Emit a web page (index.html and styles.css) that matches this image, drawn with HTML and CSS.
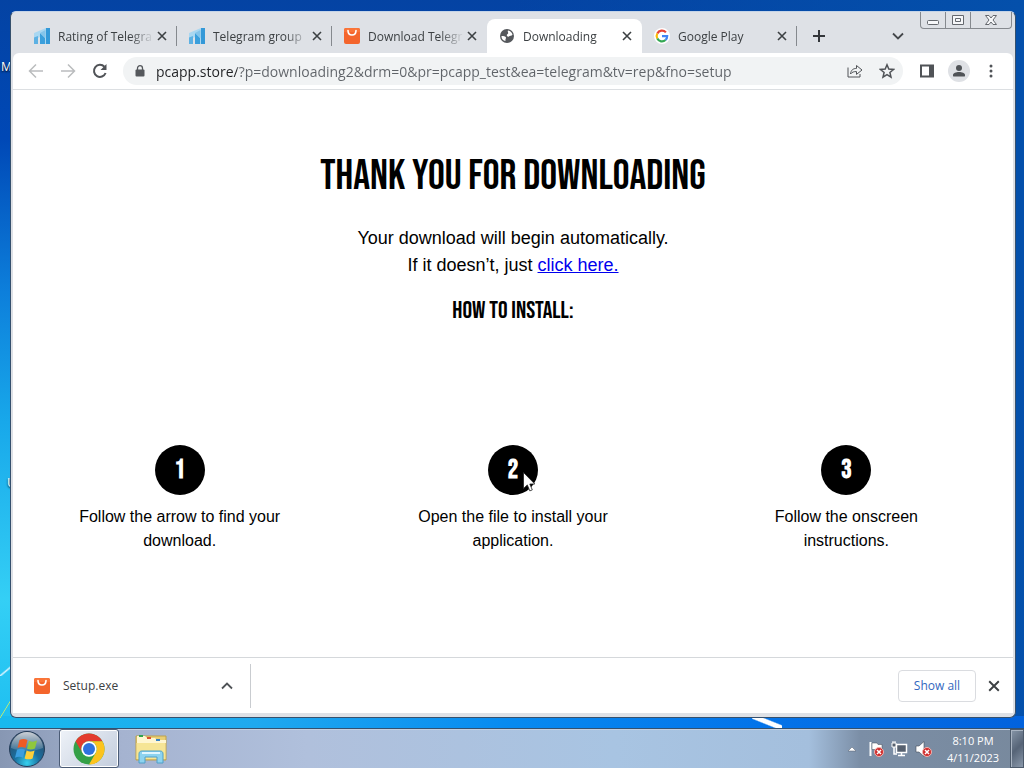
FILE: index.html
```
<!DOCTYPE html>
<html lang="en">
<head>
<meta charset="utf-8">
<meta name="viewport" content="width=device-width, initial-scale=1">
<title>Downloading</title>
<link rel="stylesheet" href="styles.css">
</head>
<body>

<!-- shared icons -->
<svg class="sprite" xmlns="http://www.w3.org/2000/svg">
  <symbol id="close" viewBox="0 0 10 10"><path d="M1 1l8 8M9 1L1 9" fill="none" stroke="currentColor" stroke-width="1.6"/></symbol>
  <symbol id="stats" viewBox="0 0 16 16">
    <path d="M0 5L12 0v16H6V9L0 12z" fill="#a9d7f1"/>
    <path d="M0 9.500l4-1.500v8H0z" fill="#5db1e3"/>
    <path d="M6 5l5 5v6H6z" fill="#3b9fdc"/>
    <path d="M6 5l5.500-3v8z" fill="#84c4ea"/>
    <path d="M12 0h4v16h-4z" fill="#3499d8"/>
  </symbol>
  <symbol id="bag" viewBox="0 0 16 16">
    <rect width="16" height="16" rx="2" fill="#f4652c"/>
    <path d="M0 4V2a2 2 0 0 1 2-2h12a2 2 0 0 1 2 2v2z" fill="#fa7438"/>
    <path d="M4 2.500c0 6 8 6 8 0" fill="none" stroke="#fff" stroke-width="1.600" stroke-linecap="round"/>
  </symbol>
  <symbol id="error" viewBox="0 0 10 10">
    <circle cx="5" cy="5" r="4.500" fill="#cf2b2b" stroke="#f3b4b0"/>
    <path d="M3 3l4 4M7 3L3 7" stroke="#fff" stroke-width="1.500"/>
  </symbol>
</svg>

<div class="desktop">
  <span class="shortcut shortcut-top">M</span>
  <span class="shortcut shortcut-low">U</span>

  <div class="workspace">
    <div class="window">
      <div class="titlebar">
        <div class="tabs">
          <div class="tab">
            <svg class="favicon"><use href="#stats"/></svg>
            <span class="tab-title">Rating of Telegra</span>
            <button class="tab-close" aria-label="Close tab"><svg><use href="#close"/></svg></button>
          </div>
          <div class="tab">
            <svg class="favicon"><use href="#stats"/></svg>
            <span class="tab-title">Telegram group</span>
            <button class="tab-close" aria-label="Close tab"><svg><use href="#close"/></svg></button>
          </div>
          <div class="tab before-active">
            <svg class="favicon"><use href="#bag"/></svg>
            <span class="tab-title">Download Telegr</span>
            <button class="tab-close" aria-label="Close tab"><svg><use href="#close"/></svg></button>
          </div>
          <div class="tab active">
            <svg class="favicon" viewBox="0 0 16 16">
              <circle cx="8" cy="8" r="7" fill="#55585c"/>
              <path d="M2.500 8c2 0 4 .3 4.500 1.500.3 1-.8 1.200-.5 3.500C4 12.500 2.300 10.500 2.500 8zM9 2.600c2.500.3 4 2 4.500 4.200-1 1.600-2.700.6-3.700 1.700-1 .6-2-.4-2-1.300 0-1 1.200-1 1.400-1.900.2-1-.9-1.500-.2-2.700z" fill="#fff"/>
            </svg>
            <span class="tab-title">Downloading</span>
            <button class="tab-close" aria-label="Close tab"><svg><use href="#close"/></svg></button>
          </div>
          <div class="tab">
            <svg class="favicon" viewBox="0 0 16 16">
              <circle cx="8" cy="8" r="8" fill="#fff"/>
              <g fill="none" stroke-width="2.200">
                <path d="M3.300 5.500A5.200 5.200 0 0 1 11.900 4.400" stroke="#ea4335"/>
                <path d="M3.300 10.500a5.200 5.200 0 0 1 0-5" stroke="#fbbc05"/>
                <path d="M11.500 12a5.200 5.200 0 0 1-8.200-1.500" stroke="#34a853"/>
                <path d="M8 8.100h5.200a5.200 5.200 0 0 1-1.700 3.900" stroke="#4285f4"/>
              </g>
            </svg>
            <span class="tab-title">Google Play</span>
            <button class="tab-close" aria-label="Close tab"><svg><use href="#close"/></svg></button>
          </div>
          <button class="new-tab" aria-label="New tab">
            <svg viewBox="0 0 12 12"><path d="M6 0v12M0 6h12" stroke="#33363a" stroke-width="2"/></svg>
          </button>
        </div>
        <button class="tab-search" aria-label="Search tabs">
          <svg viewBox="0 0 12 12"><path d="M1 3.500l5 5 5-5" fill="none" stroke="#44474b" stroke-width="1.800"/></svg>
        </button>
        <div class="window-controls">
          <button aria-label="Minimize"><svg viewBox="0 0 24 16"><rect x="6.500" y="8.500" width="11" height="4" rx="1"/></svg></button>
          <button aria-label="Maximize"><svg viewBox="0 0 24 16"><path d="M6.500 3.500h11v9h-11zM9.500 6.500h5v3h-5z"/></svg></button>
          <button class="wide" aria-label="Close"><svg viewBox="0 0 40 16"><path d="M14.500 3.500h3.500l2 2.500 2-2.500h3.500L22 8l3.500 4.500H22L20 10l-2 2.500h-3.500L18 8z"/></svg></button>
        </div>
      </div>

      <div class="toolbar">
        <button class="nav faded" aria-label="Back"><svg viewBox="0 0 16 16"><path d="M15 8H2M8 1.500L1.500 8 8 14.500"/></svg></button>
        <button class="nav faded" aria-label="Forward"><svg viewBox="0 0 16 16"><path d="M1 8h13M8 1.500L14.500 8 8 14.500"/></svg></button>
        <button class="nav" aria-label="Reload">
          <svg viewBox="0 0 16 16"><path d="M13.600 10A6 6 0 1 1 12.400 3.800" stroke-width="2"/><path d="M14.500 1v6h-6z" fill="#505357" stroke="none"/></svg>
        </button>
        <div class="omnibox">
          <svg class="lock" viewBox="0 0 10 12"><path d="M2.500 5V3.200a2.500 2.500 0 0 1 5 0V5" fill="none" stroke="#55585c" stroke-width="1.300"/><rect y="4.500" x="0.500" width="9" height="7" rx="1" fill="#55585c"/></svg>
          <input class="address" type="text" aria-label="Address" value="pcapp.store/?p=downloading2&amp;drm=0&amp;pr=pcapp_test&amp;ea=telegram&amp;tv=rep&amp;fno=setup">
          <button class="nav small" aria-label="Share">
            <svg class="thin" viewBox="0 0 16 16"><path d="M1 4.500V14h12v-3M3.500 11c.5-4 2.500-5.500 6-5.600V2.500L15 7l-5.500 4.400V8.600C7 8.500 5 9 3.500 11z"/></svg>
          </button>
          <button class="nav small" aria-label="Bookmark">
            <svg viewBox="0 0 16 16"><path d="M8 1.800l1.800 4.300 4.700.4-3.600 3 1.100 4.600L8 11.600 4 14.100l1.100-4.600-3.600-3 4.700-.4z"/></svg>
          </button>
        </div>
        <button class="nav" aria-label="Side panel">
          <svg viewBox="0 0 16 16"><path d="M1 1.500h14v13H1z" fill="#505357" stroke="none"/><path d="M3 3.500h7v9H3z" fill="#fff" stroke="none"/></svg>
        </button>
        <button class="nav profile" aria-label="Profile">
          <svg viewBox="0 0 16 16"><circle cx="8" cy="5" r="3" fill="#505357" stroke="none"/><path d="M2 13.500v-1.500c0-2 3-3 6-3s6 1 6 3v1.500z" fill="#505357" stroke="none"/></svg>
        </button>
        <button class="nav" aria-label="Menu">
          <svg viewBox="0 0 16 16"><g fill="#505357" stroke="none"><circle cx="8" cy="3" r="1.500"/><circle cx="8" cy="8" r="1.500"/><circle cx="8" cy="13" r="1.500"/></g></svg>
        </button>
      </div>

      <main class="page">
        <h1>THANK YOU FOR DOWNLOADING</h1>
        <p class="intro">Your download will begin automatically.<br>If it doesn’t, just <a href="#">click here.</a></p>
        <h2>HOW TO INSTALL:</h2>
        <ol class="steps">
          <li><span class="number">1</span><p>Follow the arrow to find your download.</p></li>
          <li>
            <span class="number">2
              <svg class="cursor" viewBox="0 0 12 20"><path d="M.5.500v16l3.800-3.600 2.500 6 2.500-1-2.500-5.900h5z" fill="#fff" stroke="#222" stroke-width="0.800"/></svg>
            </span>
            <p>Open the file to install your application.</p>
          </li>
          <li><span class="number">3</span><p>Follow the onscreen instructions.</p></li>
        </ol>
      </main>

      <div class="downloads">
        <div class="download">
          <svg class="favicon"><use href="#bag"/></svg>
          <span class="file-name">Setup.exe</span>
          <button class="nav small" aria-label="Download options"><svg viewBox="0 0 16 16"><path d="M3 10.500l5-5 5 5" stroke-width="1.800"/></svg></button>
        </div>
        <button class="show-all">Show all</button>
        <button class="bar-close" aria-label="Close downloads bar"><svg><use href="#close"/></svg></button>
      </div>
    </div>
  </div>

  <div class="taskbar">
    <button class="start" aria-label="Start">
      <svg viewBox="0 0 38 38">
        <defs>
          <radialGradient id="orb" cx=".5" cy=".9" r=".9">
            <stop offset="0" stop-color="#35d0ee"/><stop offset=".4" stop-color="#1a6f9f"/><stop offset="1" stop-color="#30445e"/>
          </radialGradient>
          <linearGradient id="shine" x2="0" y2="1"><stop stop-color="#fff" stop-opacity=".75"/><stop offset="1" stop-color="#fff" stop-opacity=".1"/></linearGradient>
        </defs>
        <circle cx="19" cy="19" r="17.500" fill="url(#orb)" stroke="#243c58"/>
        <path d="M3 18a16 16 0 0 1 32 0c-9 4-23 4-32 0z" fill="url(#shine)"/>
        <path d="M11.500 10c3-1.600 5.500-1.300 8 0l-2 8c-2.500-1.300-5-1.500-8 0z" fill="#ee5b24"/>
        <path d="M21 10.800c3 1.300 5.500 1 8-.2l-2 8c-2.700 1.200-5.200 1.400-8 .2z" fill="#8fc73e"/>
        <path d="M9 19.800c3-1.500 5.500-1.300 8 0l-2 8c-2.500-1.300-5-1.400-8 0z" fill="#3b9ee0"/>
        <path d="M18.600 20.500c2.800 1.300 5.300 1.100 8-.1l-2 8c-2.700 1.200-5.200 1.200-8 0z" fill="#fdcf3a"/>
      </svg>
    </button>
    <button class="task current" aria-label="Google Chrome">
      <svg viewBox="0 0 32 32">
        <circle cx="16" cy="16" r="15.500" fill="#34a047"/>
        <path d="M2.600 8.200A15.500 15.500 0 0 1 29.400 8.200H16a7.800 7.800 0 0 0-6.800 11.600z" fill="#e33b2e"/>
        <path d="M29.400 8.200A15.500 15.500 0 0 1 16 31.500l6.700-11.600A7.800 7.800 0 0 0 16 8.200z" fill="#fcc31e"/>
        <circle cx="16" cy="16" r="7.700" fill="#fff"/><circle cx="16" cy="16" r="6" fill="#2f72de"/>
      </svg>
    </button>
    <button class="task" aria-label="Windows Explorer">
      <svg viewBox="0 0 32 32">
        <path d="M1 3h30v24H1z" fill="#e9cf75" stroke="#bda14d"/>
        <path d="M2 3h8l2 2h8l2 2h9v3H2z" fill="#fff6d0"/>
        <path d="M4 2h4v2H4z" fill="#2fa44f"/><path d="M12 4h4v2h-4z" fill="#dc4f32"/><path d="M21 6h4v2h-4z" fill="#3882c5"/>
        <path d="M1.500 10h29v16h-29z" fill="#f6e596"/>
        <path d="M4 30V21c0-2 1-3 3-3h18c2 0 3 1 3 3v9h-6v-6H10v6z" fill="#8dd3ef" stroke="#4fa0c9"/>
        <path d="M7 20h18" stroke="#dff6ff" stroke-width="2"/>
      </svg>
    </button>
    <div class="tray">
      <button class="tray-icon" aria-label="Show hidden icons"><svg viewBox="0 0 18 18"><path d="M5 11l4-4 4 4z" fill="#fff" stroke="#555f6c" stroke-width="0.500"/></svg></button>
      <button class="tray-icon" aria-label="Action Center">
        <svg viewBox="0 0 18 18"><path d="M3.500 2v14" stroke="#fff" stroke-width="2"/><path d="M5 3h5l1 1.500h4V11h-5L9 9.500H5z" fill="#fff" stroke="#434b57" stroke-width="0.500"/><use href="#error" x="7" y="7" width="10" height="10"/></svg>
      </button>
      <button class="tray-icon" aria-label="Network">
        <svg viewBox="0 0 18 18"><path d="M5.500 4.500h10v8h-10z" fill="#56606f" stroke="#fff" stroke-width="1.500"/><path d="M7 15.500h7M10.500 13v2M3 7v7h3" fill="none" stroke="#fff" stroke-width="1.500"/><path d="M1 3h4v4H1zM2 1v2M4 1v2" fill="#56606f" stroke="#fff"/></svg>
      </button>
      <button class="tray-icon" aria-label="Volume">
        <svg viewBox="0 0 18 18"><path d="M1 6h3l5-4.500v15L4 12H1z" fill="#fff" stroke="#434b57" stroke-width="0.600"/><use href="#error" x="7" y="7" width="10" height="10"/></svg>
      </button>
      <div class="clock"><span>8:10 PM</span><span>4/11/2023</span></div>
      <button class="show-desktop" aria-label="Show desktop"></button>
    </div>
  </div>
</div>

</body>
</html>
```
FILE: styles.css
```
* { box-sizing: border-box; }
body { margin: 0; font-family: "Segoe UI", "Open Sans", "Noto Sans", sans-serif; font-size: 12px; color: #3c4043; }
button { border: none; background: none; padding: 0; margin: 0; font: inherit; color: inherit; cursor: pointer; }
svg { display: block; }
.sprite { display: none; }

.desktop {
  position: relative;
  display: flex;
  flex-direction: column;
  min-height: 100vh;
  background:
    linear-gradient(to bottom right, transparent 46%, #c9ed6a 50%, transparent 54%) 0 calc(100% - 50px) / 11px 18px no-repeat,
    linear-gradient(to bottom right, transparent 40%, #d8f4ff 50%, transparent 60%) 0 calc(100% - 92px) / 12px 10px no-repeat,
    linear-gradient(to top right, transparent 36%, #fff 42%, #fff 58%, transparent 64%) 752px calc(100% - 40px) / 30px 12px no-repeat,
    linear-gradient(90deg, #18b9ee 0, #1fa9ef 25%, #078af0 50%, #0473e9 75%, #0262dd 100%) 0 100% / 100% 52px no-repeat,
    linear-gradient(90deg, transparent 50%, #0450ab 100%),
    linear-gradient(#0443a3 0, #0048b6 18%, #0d7fdb 38%, #18a8ea 55%, #34cff5 78%, #16b9ef 100%);
}
.shortcut { position: absolute; color: #fff; text-shadow: 0 1px 2px #000; }
.shortcut-top { left: 1px; top: 58px; }
.shortcut-low { left: 7px; top: 474px; }

.workspace { flex: 1; display: flex; padding: 11px 8px 10px 10px; position: relative; }
.window {
  flex: 1;
  display: flex;
  flex-direction: column;
  min-width: 0;
  padding: 0 2px 4px;
  background: #dee1e6;
  border: 1px solid #35506d;
  border-top-color: #c4d4e8;
  border-radius: 6px;
}

/* tab strip */
.titlebar { display: flex; align-items: flex-start; height: 41px; padding-right: 1px; }
.tabs { flex: 1; display: flex; padding: 7px 0 0 9px; min-width: 0; }
.tab {
  position: relative;
  flex: 0 1 155px;
  display: flex;
  align-items: center;
  gap: 8px;
  min-width: 0;
  height: 34px;
  padding: 0 10px 0 12px;
}
.tab::after { content: ""; position: absolute; right: 0; top: 7px; width: 1px; height: 20px; background: #85898e; }
.active::after { display: none; }
.before-active::after { display: none; }
.tab.active { background: #fff; border-radius: 8px 8px 0 0; }
.favicon { flex: none; width: 16px; height: 16px; }
.tab-title {
  flex: 1;
  margin-right: -5px;
  overflow: hidden;
  white-space: nowrap;
  -webkit-mask-image: linear-gradient(90deg, #000 75%, transparent);
  mask-image: linear-gradient(90deg, #000 75%, transparent);
}
.tab-close svg { width: 10px; height: 10px; }
.bar-close svg { width: 12px; height: 12px; }
.new-tab { width: 44px; height: 34px; display: grid; place-items: center; }
.new-tab svg, .tab-search svg { width: 12px; height: 12px; }
.tab-search { display: grid; place-items: center; width: 32px; height: 48px; margin-right: 6px; }
.window-controls { display: flex; border: 1px solid #85898e; border-top: none; border-radius: 0 0 4px 4px; }
.window-controls button + button { border-left: 1px solid #85898e; }
.window-controls svg { width: 24px; height: 16px; fill: #f6f7f9; stroke: #64686e; }
.window-controls .wide svg { width: 40px; }

/* toolbar */
.toolbar {
  display: flex;
  align-items: center;
  gap: 4px;
  height: 37px;
  padding: 0 8px 0 9px;
  background: #fff;
  border-bottom: 1px solid #dcdfe2;
  border-radius: 6px 6px 0 0;
}
.nav { flex: none; display: grid; place-items: center; width: 28px; height: 28px; }
.nav svg { width: 16px; height: 16px; fill: none; stroke: #505357; stroke-width: 1.5; }
.nav svg.thin { stroke-width: 1; }
.nav.faded svg { stroke: #babcbe; }
.nav.small { width: 32px; }
.profile svg { width: 22px; height: 22px; padding: 3px; border-radius: 50%; background: #dfe1e5; }
.omnibox {
  flex: 1;
  display: flex;
  align-items: center;
  min-width: 0;
  height: 28px;
  margin: 0 6px 0 5px;
  padding-left: 12px;
  border-radius: 14px;
  background: #f1f3f4;
}
.lock { flex: none; width: 10px; height: 12px; }
.address {
  flex: 1;
  min-width: 0;
  margin-left: 11px;
  padding: 0;
  border: none;
  outline: none;
  font: 14px "Segoe UI", "Open Sans", "Noto Sans", sans-serif;
  /* host part is darker than the rest of the address */
  background: linear-gradient(90deg, #202124 81px, #5f6368 81px);
  -webkit-background-clip: text;
  background-clip: text;
  color: transparent;
}

/* page */
.page {
  flex: 1;
  padding: 62px 0 32px;
  background: #fff;
  color: #000;
  text-align: center;
  font-family: "Liberation Sans", Arial, sans-serif;
}
h1, h2, .number { font-family: "Bebas Neue", "Liberation Sans Narrow", "Liberation Sans", sans-serif; }
h1, h2 { font-weight: normal; }
.number { font-weight: bold; }
h1 { margin: 0; font-size: 42px; line-height: 50px; }
.intro { margin: 23px 0 18px; font-size: 18px; line-height: 27px; }
.intro a { color: #0000ee; }
h2 { margin: 0; font-size: 24px; line-height: 28px; }
.steps { display: grid; grid-template-columns: repeat(3, 1fr); list-style: none; margin: 120px 0 0; padding: 0; }
.steps li { display: flex; flex-direction: column; align-items: center; gap: 10px; }
.steps p { margin: 0; max-width: 220px; font-size: 16px; line-height: 24px; }
.number {
  position: relative;
  width: 50px;
  height: 50px;
  border-radius: 50%;
  background: #000;
  color: #fff;
  font-size: 26px;
  line-height: 52px;
}
.cursor { position: absolute; left: 35px; top: 27px; width: 12px; height: 20px; }

/* downloads bar */
.downloads {
  display: flex;
  align-items: center;
  height: 56px;
  padding-right: 13px;
  background: #fff;
  border-top: 1px solid #d5d8db;
}
.download {
  display: flex;
  align-items: center;
  width: 238px;
  height: 44px;
  padding: 0 7px 0 21px;
  border-right: 1px solid #c9ccd0;
  margin-right: auto;
}
.file-name { flex: 1; margin-left: 13px; }
.show-all { width: 78px; height: 32px; border: 1px solid #dadce0; border-radius: 4px; color: #3367c0; }
.bar-close { margin-left: 12px; }

/* taskbar */
.taskbar {
  position: relative;
  display: flex;
  height: 40px;
  border-top: 1px solid #34516f;
  background: linear-gradient(90deg, #8797b3 0, #a5b3d0 12%, #b0c0dc 30%, #a8c4e2 60%, #a4bfdd 79%, #7b8ea6 84%, #78899d 100%);
  box-shadow: inset 0 1px #c3d0e2;
}
.start { width: 54px; display: grid; place-items: center; }
.start svg { width: 38px; height: 38px; }
.task { width: 60px; display: grid; place-items: center; margin-left: 5px; }
.task + .task { margin-left: 2px; }
.task svg { width: 32px; height: 32px; }
.task.current { border: 1px solid #4b5c76; border-radius: 3px; background: linear-gradient(135deg, #eef2f8, #c3cddd); box-shadow: inset 0 0 0 1px #fff; }
.tray { display: flex; align-items: center; margin-left: auto; color: #fff; }
.tray-icon { width: 24px; display: grid; place-items: center; }
.tray-icon svg { width: 18px; height: 18px; }
.clock { display: flex; flex-direction: column; width: 74px; text-align: center; font-size: 11px; line-height: 17px; }
.show-desktop { width: 14px; height: 39px; border: 1px solid #4c5a6b; background: linear-gradient(135deg, #8796a8, #566477 50%, #8a98aa); box-shadow: inset 1px 1px #a9b4c2; }
```
